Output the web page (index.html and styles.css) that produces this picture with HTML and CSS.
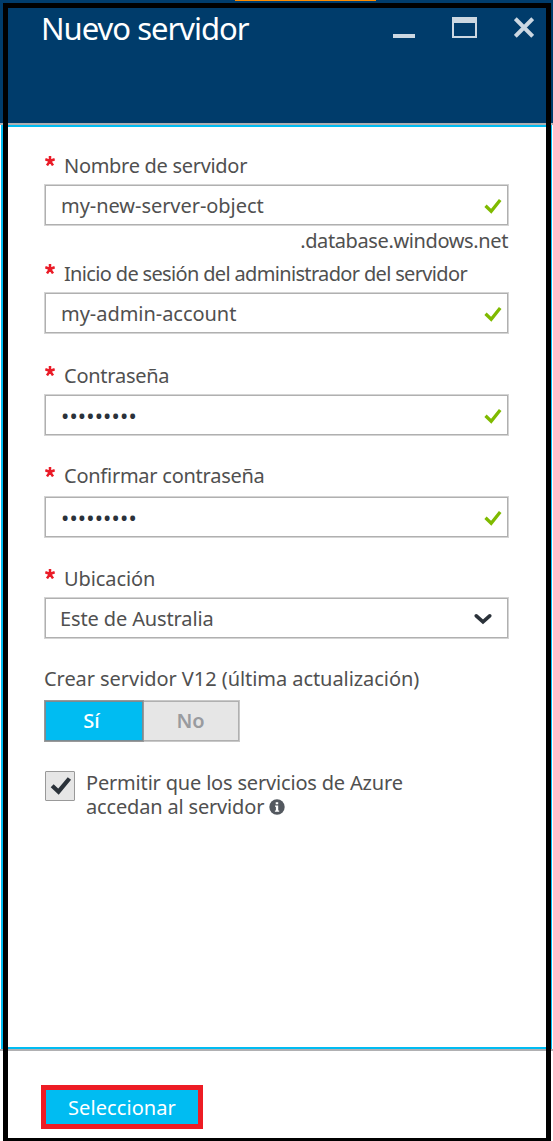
FILE: index.html
```html
<!DOCTYPE html>
<html lang="es">
<head>
<meta charset="utf-8">
<title>Nuevo servidor</title>
<link rel="stylesheet" href="styles.css">
</head>
<body>
<svg class="defs" width="0" height="0">
  <symbol id="check" viewBox="0 0 18 16"><path d="M1.5 7.8 7.2 13.2 16.2 2" fill="none" stroke="#7fba00" stroke-width="3.3"/></symbol>
  <symbol id="star" viewBox="0 0 10 10"><path d="M5 5V0M5 5 .3 3.3M5 5 9.7 3.3M5 5 2 9.4M5 5 8 9.4" fill="none" stroke="#ea1b27" stroke-width="2.5"/></symbol>
</svg>
<div class="blade">
  <header class="header">
    <h1 class="title">Nuevo servidor</h1>
    <div class="controls">
      <svg width="22" height="21" viewBox="0 0 22 21"><path d="M0 17H22V21H0z" fill="#ccd8e2"/></svg>
      <svg width="25" height="21" viewBox="0 0 25 21"><path fill-rule="evenodd" d="M0 0H25V21H0zM2 6V19H23V6z" fill="#ccd8e2"/></svg>
      <svg width="20" height="21" viewBox="0 0 20 21"><path d="M1.3 1.7 18.7 19.3M18.7 1.7 1.3 19.3" stroke="#ccd8e2" stroke-width="4"/></svg>
    </div>
  </header>
  <main class="form">
    <section class="field name">
      <div class="label"><svg class="star"><use href="#star"/></svg><span class="t1">Nombre de servidor</span></div>
      <div class="box"><span class="t2">my-new-server-object</span><svg class="check"><use href="#check"/></svg></div>
      <div class="suffix"><span class="t3">.database.windows.net</span></div>
    </section>
    <section class="field login">
      <div class="label"><svg class="star"><use href="#star"/></svg><span class="t4">Inicio de sesión del administrador del servidor</span></div>
      <div class="box"><span class="t5">my-admin-account</span><svg class="check"><use href="#check"/></svg></div>
    </section>
    <section class="field password">
      <div class="label"><svg class="star"><use href="#star"/></svg><span class="t6">Contraseña</span></div>
      <div class="box"><span class="dots">•••••••••</span><svg class="check"><use href="#check"/></svg></div>
    </section>
    <section class="field confirm">
      <div class="label"><svg class="star"><use href="#star"/></svg><span class="t7">Confirmar contraseña</span></div>
      <div class="box"><span class="dots">•••••••••</span><svg class="check"><use href="#check"/></svg></div>
    </section>
    <section class="field place">
      <div class="label"><svg class="star"><use href="#star"/></svg><span class="t8">Ubicación</span></div>
      <div class="box select"><span class="t9">Este de Australia</span><svg class="chevron" viewBox="0 0 18 12"><path d="M2.3 2.8 9 8.8 15.7 2.8" fill="none" stroke="#2b323a" stroke-width="3.6" stroke-linecap="round"/></svg></div>
    </section>
    <section class="version">
      <div class="label"><span class="t10">Crear servidor V12 (última actualización)</span></div>
      <div class="toggle"><div class="option on">Sí</div><div class="option off">No</div></div>
    </section>
    <section class="allow">
      <div class="checkbox"><svg width="22" height="20" viewBox="0 0 22 20"><path d="M2.2 9.8 8.5 15.7 19.4 2.5" fill="none" stroke="#2b323a" stroke-width="4.3"/></svg></div>
      <div class="text">
        <div class="line t11">Permitir que los servicios de Azure</div>
        <div class="line"><span class="t12">accedan al servidor</span><svg class="info" viewBox="0 0 16 16"><circle cx="8" cy="8" r="7.7" fill="#53585f"/><path d="M6.7 3.2h2.5v2.1H6.7zM6 6.5h3.2v5h1v1.3H5.9v-1.3h1V7.7H6z" fill="#fff"/></svg></div>
      </div>
    </section>
  </main>
  <footer class="footer"><div class="button"><span class="t13">Seleccionar</span></div></footer>
</div>
<div class="accent"></div>
<div class="frame"></div>
</body>
</html>
```

FILE: styles.css
```css
* { box-sizing: border-box; }
body { margin: 0; width: 553px; height: 1141px; overflow: hidden; position: relative; background: #fff; color: #505050; font: 20px/24px "Noto Sans", "Open Sans", sans-serif; }
.defs { display: block; }
.blade { display: flex; flex-direction: column; height: 1141px; }
.header { height: 125px; background: #003c6b; border-bottom: 2px solid #b0b0b2; display: flex; justify-content: space-between; padding: 8px 19px 0 41px; }
.title { margin: 0; font-size: 31px; line-height: 40px; font-weight: 400; color: #fff; letter-spacing: -1px; white-space: nowrap; }
.controls { display: flex; align-items: flex-start; padding-top: 9px; }
.controls svg + svg { margin-left: 37px; }
.form { height: 924px; border: 2px solid #00bcf2; border-width: 2px 1px 2px 2px; margin: 0 1px; padding: 26px 42px 0 41px; }
.label { height: 24px; display: flex; margin-bottom: 7px; padding-top: 1px; white-space: nowrap; }
.star { width: 10px; height: 10px; margin: 2px 9px 0 1px; flex: none; }
.field { height: 102px; }
.name { height: 108px; }
.password { height: 100px; }
.confirm { height: 103px; }
.confirm .label { margin-bottom: 9px; }
.confirm .star { margin-top: 3px; }
.place { height: 100px; }
.box { height: 42px; border: 1px solid #d4d4d4; box-shadow: inset 0 0 0 1px #b0b0b0; display: flex; align-items: center; justify-content: space-between; padding: 2px 6px 0 16px; white-space: nowrap; }
.check { width: 18px; height: 16px; }
.select { padding: 2px 16px 0 15px; }
.chevron { width: 18px; height: 12px; }
.suffix { text-align: right; padding-right: 1px; margin-top: 3px; height: 23px; white-space: nowrap; }
.dots { color: #2b323a; font-size: 22px; letter-spacing: 0.15px; padding-bottom: 2px; }
.version { height: 104px; }
.version .label { margin-bottom: 10px; }
.toggle { display: flex; width: 196px; height: 42px; }
.option { text-align: center; line-height: 40px; }
.on { width: 100px; color: #fff; background: #00bcf2; border: 1px solid #999; box-shadow: inset 0 0 0 1px #798b93; padding-right: 5px; font-weight: 500; }
.off { width: 96px; color: #999b9f; background: #e6e6e6; border: 1px solid #c8c8c8; border-left: 0; box-shadow: inset -1px 0 #b0b0b0, inset 0 1px #b0b0b0, inset 0 -1px #b0b0b0; font-weight: 600; padding-right: 2px; }
.allow { display: flex; }
.checkbox { width: 30px; height: 30px; margin: 1px 11px 0 1px; background: #e6e6e6; border: 1px solid #999; border-radius: 1px; flex: none; padding: 4px 0 0 4px; }
.text { padding-top: 1px; white-space: nowrap; }
.line { display: flex; height: 24px; }
.info { width: 16px; height: 16px; margin: 4px 0 0 5px; }
.footer { height: 92px; border-top: 2px solid #b0b0b2; padding: 34px 0 0 41px; }
.button { width: 162px; height: 44px; border: 5px solid #ed1c24; background: #00bcf2; color: #fff; text-align: center; line-height: 35px; }
.accent { position: absolute; left: 235px; top: 0; width: 141px; height: 1px; background: #ff8c00; }
.frame { position: absolute; left: 3px; top: 3px; width: 548px; height: 1138px; border: 5px solid #000; border-bottom-width: 3px; }
.t1 { letter-spacing: -0.3px; }
.t2 { letter-spacing: -0.05px; }
.t3 { letter-spacing: -0.38px; }
.t4 { letter-spacing: -0.66px; }
.t5 { letter-spacing: -0.04px; }
.t6 { letter-spacing: -0.25px; }
.t7 { letter-spacing: -0.25px; }
.t8 { letter-spacing: -0.1px; }
.t9 { letter-spacing: -0.13px; }
.t10 { letter-spacing: -0.06px; }
.t11 { letter-spacing: -0.18px; }
.t12 { letter-spacing: -0.17px; }
.t13 { letter-spacing: 0.08px; }
```
